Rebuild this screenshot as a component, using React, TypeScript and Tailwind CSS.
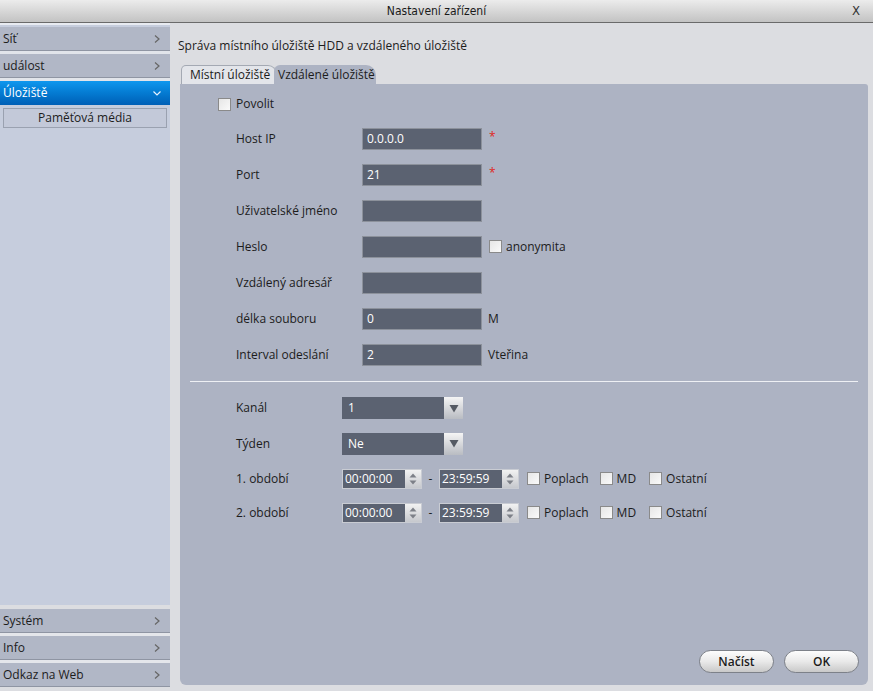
import React from "react";

const font = { fontFamily: '"Open Sans", "Noto Sans", sans-serif' };

function Chevron({ down = false, white = false }: { down?: boolean; white?: boolean }) {
  return (
    <svg width="10" height="10" viewBox="0 0 10 10" className="shrink-0">
      {down ? (
        <path d="M1.5 3.5 L5 7 L8.5 3.5" fill="none" stroke={white ? "#e8f2ff" : "#666"} strokeWidth="1.2" />
      ) : (
        <path d="M3 1.5 L7 5 L3 8.5" fill="none" stroke={white ? "#fff" : "#666"} strokeWidth="1.2" />
      )}
    </svg>
  );
}

function MenuItem({ label }: { label: string }) {
  return (
    <div className="h-[24px] flex items-center justify-between pl-[3px] pr-[8px] bg-[#b1b7c6] border-b border-[#8f95a3] text-[12px] text-[#1c1c1c]">
      <span>{label}</span>
      <Chevron />
    </div>
  );
}

function Checkbox() {
  return (
    <span className="inline-block w-[13px] h-[13px] border border-[#8a8a8a] bg-gradient-to-br from-[#e6e6e6] to-[#fafafa] shrink-0" />
  );
}

function TextInput({ value = "" }: { value?: string }) {
  return (
    <div className="w-[120px] h-[22px] bg-[#5b6271] border border-[#8c919b] text-white text-[12px] pl-[4px] flex items-center">
      {value}
    </div>
  );
}

function Select({ value }: { value: string }) {
  return (
    <div className="w-[121px] h-[22px] flex">
      <div className="flex-1 bg-[#5b6271] text-white text-[12px] pl-[6px] flex items-center">{value}</div>
      <div className="w-[19px] bg-gradient-to-b from-[#f5f5f5] to-[#b9bcc2] flex items-center justify-center">
        <svg width="10" height="9" viewBox="0 0 10 9">
          <path d="M0.5 1 L9.5 1 L5 8.5 Z" fill="#555a63" />
        </svg>
      </div>
    </div>
  );
}

function TimeInput({ value }: { value: string }) {
  return (
    <div className="w-[80px] h-[20px] flex border border-[#c9ccd3]">
      <div className="flex-1 bg-[#5b6271] text-white text-[12px] pl-[2px] flex items-center">{value}</div>
      <div className="w-[16px] bg-gradient-to-b from-[#f2f2f2] to-[#c6c8cd] flex flex-col items-center justify-center gap-[2px]">
        <svg width="8" height="5" viewBox="0 0 8 5">
          <path d="M0.5 4.5 L7.5 4.5 L4 0.5 Z" fill="#7d8088" />
        </svg>
        <svg width="8" height="5" viewBox="0 0 8 5">
          <path d="M0.5 0.5 L7.5 0.5 L4 4.5 Z" fill="#7d8088" />
        </svg>
      </div>
    </div>
  );
}

function FormRow({ label, children }: { label: string; children: React.ReactNode }) {
  return (
    <div className="h-[36px] flex items-center">
      <div className="w-[126px] pl-[56px] box-content text-[12px] text-[#1c1c1c] whitespace-nowrap">{label}</div>
      <div className="flex items-center">{children}</div>
    </div>
  );
}

function PeriodRow({ label, h }: { label: string; h: string }) {
  return (
    <div className={`${h} flex items-center`}>
      <div className="w-[106px] pl-[56px] box-content text-[12px] text-[#1c1c1c] whitespace-nowrap">{label}</div>
      <TimeInput value="00:00:00" />
      <span className="w-[17px] text-center text-[12px] text-[#1c1c1c]">-</span>
      <TimeInput value="23:59:59" />
      <span className="ml-[8px]"><Checkbox /></span>
      <span className="ml-[4px] text-[12px] text-[#1c1c1c]">Poplach</span>
      <span className="ml-[11px]"><Checkbox /></span>
      <span className="ml-[4px] text-[12px] text-[#1c1c1c]">MD</span>
      <span className="ml-[13px]"><Checkbox /></span>
      <span className="ml-[4px] text-[12px] text-[#1c1c1c]">Ostatní</span>
    </div>
  );
}

function Btn({ label }: { label: string }) {
  return (
    <div className="w-[75px] h-[23px] rounded-full border border-[#7d8189] bg-gradient-to-b from-[#fdfdfd] via-[#e9e9e9] to-[#c9c9c9] flex items-center justify-center text-[12px] font-semibold text-[#1c1c1c]">
      {label}
    </div>
  );
}

export default function App() {
  return (
    <div className="w-[873px] h-[691px] bg-[#dcdde1] flex flex-col overflow-hidden" style={font}>
      <div className="h-[23px] shrink-0 bg-gradient-to-b from-[#ececec] to-[#c3c3c3] border-b border-[#6a6a6a] relative flex items-center justify-center">
        <span className="text-[12px] text-[#1a1a1a]" style={{ fontFamily: '"Liberation Sans Narrow", "DejaVu Sans Condensed", sans-serif' }}>
          Nastavení zařízení
        </span>
        <span className="absolute right-[13px] top-[1px] text-[13px] text-[#333]" style={{ fontFamily: '"DejaVu Sans Condensed", sans-serif' }}>X</span>
      </div>
      <div className="flex flex-1 min-h-0">
        <div className="w-[170px] shrink-0 flex flex-col">
          <div className="flex-1 bg-[#c6cddd] border-t-[2px] border-[#e8ebf1] flex flex-col">
            <div className="mt-[2px]">
              <MenuItem label="Síť" />
            </div>
            <div className="h-[3px] bg-[#e1e4ea]" />
            <MenuItem label="událost" />
            <div className="h-[3px] bg-[#e1e4ea]" />
            <div className="h-[24px] flex items-center justify-between pl-[3px] pr-[8px] bg-gradient-to-b from-[#0f97ee] to-[#005fb6] text-[12px] text-white">
              <span>Úložiště</span>
              <Chevron down white />
            </div>
            <div className="px-[3px] pt-[3px]">
              <div className="h-[20px] bg-[#c3c9d9] border border-[#9aa1b0] flex items-center justify-center text-[12px] text-[#1c1c1c]">
                Paměťová média
              </div>
            </div>
          </div>
          <div className="h-[4px] bg-[#dcdde1]" />
          <MenuItem label="Systém" />
          <div className="h-[3px] bg-[#e4e6eb]" />
          <MenuItem label="Info" />
          <div className="h-[3px] bg-[#e4e6eb]" />
          <MenuItem label="Odkaz na Web" />
          <div className="h-[4px] bg-[#dcdde1]" />
        </div>
        <div className="flex-1 flex flex-col pl-[10px] pr-[5px] pb-[6px]">
          <div className="h-[42px] flex items-center text-[12px] text-[#1c1c1c]">
            <span className="-ml-[2px] mt-[3px]">Správa místního úložiště HDD a vzdáleného úložiště</span>
          </div>
          <div className="h-[19px] flex items-end">
            <div className="ml-[1px] h-[19px] w-[96px] bg-[#e3e5ea] border border-b-0 border-[#a4a9b3] rounded-tl-[5px] rounded-tr-[9px] flex items-center pl-[8px] text-[12px] text-[#1c1c1c] whitespace-nowrap">
              Místní úložiště
            </div>
            <div className="-ml-[3px] h-[19px] w-[102px] bg-[#adb3c3] rounded-tl-[6px] rounded-tr-[10px] flex items-center pl-[4px] text-[12px] text-[#1c1c1c] whitespace-nowrap">
              Vzdálené úložiště
            </div>
          </div>
          <div className="flex-1 bg-[#adb3c3] rounded-b-[6px] rounded-tr-[3px] flex flex-col">
            <div className="mt-[12px] h-[16px] flex items-center pl-[38px]">
              <Checkbox />
              <span className="ml-[5px] text-[12px] text-[#1c1c1c]">Povolit</span>
            </div>
            <div className="mt-[9px]">
              <FormRow label="Host IP">
                <TextInput value="0.0.0.0" />
                <span className="ml-[7px] text-[#e0261c] text-[12px] -mt-[4px]">*</span>
              </FormRow>
              <FormRow label="Port">
                <TextInput value="21" />
                <span className="ml-[7px] text-[#e0261c] text-[12px] -mt-[4px]">*</span>
              </FormRow>
              <FormRow label="Uživatelské jméno">
                <TextInput />
              </FormRow>
              <FormRow label="Heslo">
                <TextInput />
                <span className="ml-[7px]"><Checkbox /></span>
                <span className="ml-[4px] text-[12px] text-[#1c1c1c]">anonymita</span>
              </FormRow>
              <FormRow label="Vzdálený adresář">
                <TextInput />
              </FormRow>
              <FormRow label="délka souboru">
                <TextInput value="0" />
                <span className="ml-[6px] text-[12px] text-[#1c1c1c]">M</span>
              </FormRow>
              <FormRow label="Interval odeslání">
                <TextInput value="2" />
                <span className="ml-[6px] text-[12px] text-[#1c1c1c]">Vteřina</span>
              </FormRow>
            </div>
            <div className="mt-[8px] mx-[10px] h-[1px] bg-[#eef0f4]" />
            <div className="mt-[8px]">
              <div className="h-[36px] flex items-center">
                <div className="w-[106px] pl-[56px] box-content text-[12px] text-[#1c1c1c]">Kanál</div>
                <Select value="1" />
              </div>
              <div className="h-[35px] flex items-center">
                <div className="w-[106px] pl-[56px] box-content text-[12px] text-[#1c1c1c]">Týden</div>
                <Select value="Ne" />
              </div>
              <PeriodRow label="1. období" h="h-[35px]" />
              <PeriodRow label="2. období" h="h-[34px]" />
            </div>
            <div className="flex-1" />
            <div className="flex justify-end gap-[10px] pr-[9px] pb-[12px]">
              <Btn label="Načíst" />
              <Btn label="OK" />
            </div>
          </div>
        </div>
      </div>
    </div>
  );
}
